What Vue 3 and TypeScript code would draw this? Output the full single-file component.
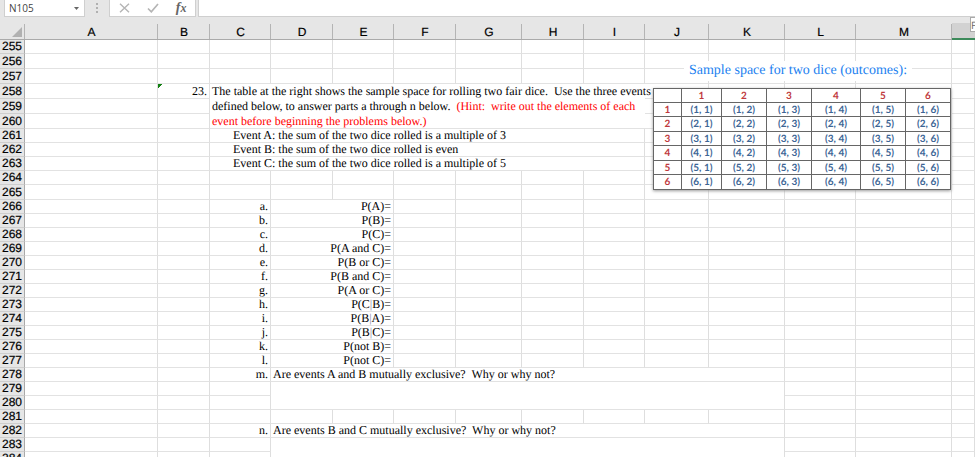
<script setup lang="ts">
import { ref } from 'vue'

interface Part {
  text: string
  tone?: 'hint' | 'pipe'
}

interface Cell {
  col: number
  colspan: number
  rowspan: number
  kind: string
  parts: Part[]
}

interface Row {
  id: number
  tall: boolean
  cells: Cell[]
}

const columns = ['A', 'B', 'C', 'D', 'E', 'F', 'G', 'H', 'I', 'J', 'K', 'L', 'M', 'N']
const firstRow = 255
const lastRow = 284
const tallRows = [256, 257, 258, 259, 260, 265]

const nameBox = ref('N105')
const formula = ref('')

const content: Record<number, Cell[]> = {}

function put(row: number, name: string, parts: Part[], kind = '', colspan = 1, rowspan = 1) {
  if (!content[row]) content[row] = []
  content[row].push({ col: columns.indexOf(name), colspan, rowspan, kind, parts })
}

put(258, 'B', [{ text: '23.' }], 'right flag')
put(
  258,
  'C',
  [
    { text: 'The table at the right shows the sample space for rolling two fair dice.  Use the three events\n' },
    { text: 'defined below, to answer parts a through n below.  ' },
    { text: '(Hint:  write out the elements of each\n', tone: 'hint' },
    { text: 'event before beginning the problems below.)', tone: 'hint' },
  ],
  'prompt',
  7,
  3,
)
const events = [
  'Event A: the sum of the two dice rolled is a multiple of 3',
  'Event B: the sum of the two dice rolled is even',
  'Event C: the sum of the two dice rolled is a multiple of 5',
]
events.forEach((text, i) => put(261 + i, 'C', [{ text }], 'indent', 7))

const parts = [
  'P(A)=', 'P(B)=', 'P(C)=', 'P(A and C)=', 'P(B or C)=', 'P(B and C)=',
  'P(A or C)=', 'P(C|B)=', 'P(B|A)=', 'P(B|C)=', 'P(not B)=', 'P(not C)=',
]
parts.forEach((label, i) => {
  put(266 + i, 'C', [{ text: 'abcdefghijkl'[i] + '.' }], 'right')
  const [before, after] = label.split('|')
  const pieces: Part[] = after
    ? [{ text: before }, { text: '|', tone: 'pipe' }, { text: after }]
    : [{ text: before }]
  put(266 + i, 'D', pieces, 'right', 2)
})

put(278, 'C', [{ text: 'm.' }], 'right')
put(278, 'D', [{ text: 'Are events A and B mutually exclusive?  Why or why not?' }], '', 8)
put(279, 'D', [], '', 8, 2)
put(282, 'C', [{ text: 'n.' }], 'right')
put(282, 'D', [{ text: 'Are events B and C mutually exclusive?  Why or why not?' }], '', 8)
put(283, 'D', [], '', 8, 2)

const rows: Row[] = []
const covered = new Set<string>()
for (let id = firstRow; id <= lastRow; id++) {
  const cells: Cell[] = []
  for (let col = 0; col < columns.length; col++) {
    if (covered.has(`${id}:${col}`)) continue
    const cell = content[id]?.find((c) => c.col === col)
      ?? { col, colspan: 1, rowspan: 1, kind: '', parts: [] }
    for (let r = 0; r < cell.rowspan; r++) {
      for (let c = 0; c < cell.colspan; c++) covered.add(`${id + r}:${col + c}`)
    }
    cells.push(cell)
  }
  rows.push({ id, tall: tallRows.includes(id), cells })
}

const faces = [1, 2, 3, 4, 5, 6]
</script>

<template>
  <main class="workbook">
    <header class="formula-bar">
      <div class="name-box">
        <input v-model="nameBox" class="name-input" aria-label="Name box" />
        <button class="drop" type="button" aria-label="Open name list">
          <svg width="5" height="3" viewBox="0 0 5 3"><path d="M0 0H5L2.5 3Z" fill="#666" /></svg>
        </button>
      </div>
      <svg class="grip" width="3" height="11" viewBox="0 0 3 11" aria-hidden="true">
        <path d="M0 1h2v2h-2zM0 5h2v2h-2zM0 9h2v2h-2z" fill="#b0b0b0" />
      </svg>
      <div class="actions">
        <button type="button" aria-label="Cancel">
          <svg width="11" height="10" viewBox="0 0 11 10"><path d="M1 .8 10 9.200M10 .8 1 9.200" stroke="#b5b5b5" stroke-width="1.400" fill="none" /></svg>
        </button>
        <button type="button" aria-label="Enter">
          <svg width="12" height="10" viewBox="0 0 12 10"><path d="M1 5.500 4.300 8.800 11 1" stroke="#b5b5b5" stroke-width="1.700" fill="none" /></svg>
        </button>
        <button class="fx" type="button" aria-label="Insert function"><i>f</i><i class="x">x</i></button>
      </div>
      <input v-model="formula" class="formula" aria-label="Formula" />
    </header>

    <section class="sheet">
      <table class="grid">
        <colgroup>
          <col class="w-head" />
          <col v-for="name in columns" :key="name" :class="'w-' + name.toLowerCase()" />
        </colgroup>
        <thead>
          <tr>
            <th class="corner" aria-label="Select all">
              <svg width="10" height="10" viewBox="0 0 10 10"><path d="M10 0V10H0Z" fill="#b1b1b1" /></svg>
            </th>
            <th v-for="name in columns" :key="name" scope="col" :class="{ selected: name === 'N' }">
              <span v-if="name !== 'N'">{{ name }}</span>
            </th>
          </tr>
        </thead>
        <tbody>
          <tr v-for="row in rows" :key="row.id" :class="{ tall: row.tall }">
            <th scope="row">{{ row.id }}</th>
            <td
              v-for="cell in row.cells"
              :key="cell.col"
              :colspan="cell.colspan"
              :rowspan="cell.rowspan"
              :class="cell.kind"
            ><span v-for="(part, i) in cell.parts" :key="i" :class="part.tone">{{ part.text }}</span></td>
          </tr>
        </tbody>
      </table>

      <div class="picture">
        <h2>Sample space for two dice (outcomes):</h2>
        <table class="dice">
          <colgroup>
            <col class="d0" /><col class="d1" /><col class="d2" /><col class="d2" />
            <col class="d4" /><col class="d2" /><col class="d2" />
          </colgroup>
          <thead>
            <tr>
              <td></td>
              <th v-for="n in faces" :key="n" scope="col">{{ n }}</th>
            </tr>
          </thead>
          <tbody>
            <tr v-for="a in faces" :key="a">
              <th scope="row">{{ a }}</th>
              <td v-for="b in faces" :key="b">({{ a }}, {{ b }})</td>
            </tr>
          </tbody>
        </table>
      </div>
      <div class="tip">F</div>
    </section>
  </main>
</template>

<style>
body {
  margin: 0;
  background: #fff;
}
</style>

<style scoped>
.workbook {
  height: 100vh;
  overflow: hidden;
  background: #fff;
  font-family: "Liberation Serif", serif;
  text-rendering: geometricPrecision;
  color: #000;
}

.formula-bar {
  display: flex;
  align-items: stretch;
  box-sizing: border-box;
  height: 17px;
  padding-left: 4px;
  background: #e6e6e6;
}

button,
input {
  box-sizing: border-box;
  min-width: 0;
  margin: 0;
  padding: 0;
  border: 0;
  outline: 0;
  background: transparent;
}

button {
  display: flex;
  align-items: center;
  justify-content: center;
}

.name-box {
  display: flex;
  box-sizing: border-box;
  width: 81px;
  background: #fff;
  border: 1px solid #cfcfcf;
  border-top: 0;
}

.name-input {
  flex: 1;
  padding-left: 4px;
  font: 10px "Open Sans", sans-serif;
  color: #444;
}

.drop {
  width: 15px;
}

.grip {
  margin: 2px 10px 0 11px;
}

.actions {
  display: flex;
  box-sizing: border-box;
  justify-content: space-around;
  width: 87px;
  margin-right: 2px;
  background: #fff;
  border: 1px solid #cfcfcf;
  border-top: 0;
}

.fx {
  font: bold 14px/14px "Liberation Serif", serif;
  color: #666;
}

.fx .x {
  font-size: 12px;
}

.formula {
  flex: 1;
  background: #fff;
  border: 1px solid #cfcfcf;
  border-width: 0 0 1px 1px;
  font: 10px "Open Sans", sans-serif;
}

.sheet {
  position: relative;
}

.grid {
  width: 100%;
  table-layout: fixed;
  border-collapse: separate;
  border-spacing: 0;
}

.w-head { width: 25px; }
.w-a { width: 133px; }
.w-b { width: 52px; }
.w-c, .w-e, .w-i { width: 61px; }
.w-d, .w-f, .w-h { width: 62px; }
.w-g { width: 66px; }
.w-j { width: 64px; }
.w-k { width: 76px; }
.w-l { width: 71px; }
.w-m { width: 96px; }

.grid > thead > tr {
  height: 23px;
}

.grid > tbody > tr {
  height: 14px;
}

.grid > tbody > tr.tall {
  height: 15px;
}

.grid > thead > tr > th,
.grid > tbody > tr > th,
.grid > tbody > tr > td {
  box-sizing: border-box;
  padding: 0;
}

.grid > thead > tr > th {
  font: 12px/14px "Liberation Sans", sans-serif;
  vertical-align: bottom;
  border-bottom: 1px solid #aaa;
  background: linear-gradient(#b4b4b4, #b4b4b4) right bottom / 1px 15px no-repeat #e6e6e6;
  -webkit-text-stroke: 0.2px #000;
}

.grid > thead > tr > th.selected {
  border-bottom: 2px solid #3c8a5a;
  background: linear-gradient(#d2d2d2, #d2d2d2) right bottom / 100% 15px no-repeat #e6e6e6;
}

.grid > thead > tr > th.corner {
  padding: 0 3px 2px 0;
  text-align: right;
}

.corner svg {
  display: block;
  margin-left: auto;
}

.grid > tbody > tr > th {
  font: 12px/13px "Liberation Sans", sans-serif;
  text-align: center;
  background: #e6e6e6;
  border-right: 1px solid #aaa;
  border-bottom: 1px solid #cecece;
  -webkit-text-stroke: 0.2px #000;
}

.grid > tbody > tr > td {
  padding: 0 2px;
  font-size: 12px;
  line-height: 13px;
  white-space: pre;
  vertical-align: middle;
  border-right: 1px solid #dedede;
  border-bottom: 1px solid #e2e2e2;
}

.grid > tbody > tr > td.right {
  text-align: right;
}

.grid > tbody > tr > td.flag {
  vertical-align: bottom;
  background: linear-gradient(135deg, #128012 3px, transparent 3px);
}

.grid > tbody > tr > td.prompt {
  line-height: 15px;
  border-right: 0;
  border-bottom: 0;
  box-shadow: inset 0 -1px #e2e2e2;
}

.grid > tbody > tr > td.indent {
  padding-left: 23px;
}

.hint {
  color: #f00;
}

.pipe {
  color: #8088a8;
}

.picture {
  position: absolute;
  top: 44px;
  left: 651px;
  width: 300px;
}

.picture h2 {
  width: 228px;
  margin: 0 auto 7px 33px;
  font: 14px/20px "Liberation Serif", serif;
  text-align: center;
  white-space: nowrap;
  color: #1b7ff0;
  background: #fff;
}

.dice {
  width: 297px;
  margin-left: 2px;
  table-layout: fixed;
  border-collapse: collapse;
  background: #fff;
  box-shadow: 0 1px 3px #999;
  font: bold 10px/12px Lato, sans-serif;
  text-align: center;
}

.dice th,
.dice td {
  height: 13px;
  padding: 0;
  border: 1px solid #666;
  line-height: 12px;
}

.dice tr:nth-child(2n) > * {
  height: 14px;
}

.dice th {
  color: #c0393d;
}

.dice td {
  color: #3c6595;
}

.d0 { width: 28px; }
.d1 { width: 40px; }
.d2 { width: 45px; }
.d4 { width: 49px; }

.tip {
  position: absolute;
  top: 0;
  right: 0;
  box-sizing: border-box;
  width: 5px;
  height: 15px;
  overflow: hidden;
  border: 1px solid #aaa;
  border-right: 0;
  background: #fff;
  font: 10px/14px "Open Sans", sans-serif;
  color: #666;
}
</style>
